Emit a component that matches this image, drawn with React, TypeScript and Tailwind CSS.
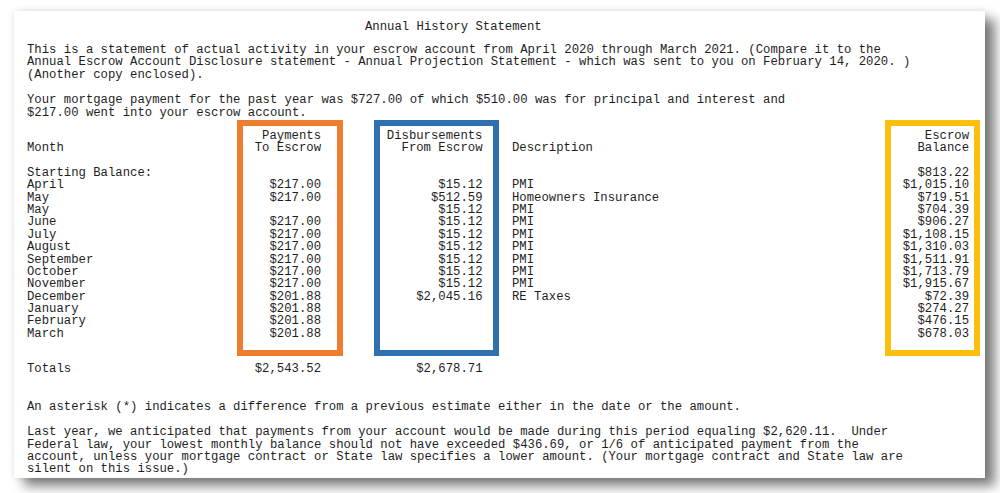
import React from 'react';

const rows = [
  { month: 'April', pay: '$217.00', dis: '$15.12', desc: 'PMI', bal: '$1,015.10' },
  { month: 'May', pay: '$217.00', dis: '$512.59', desc: 'Homeowners Insurance', bal: '$719.51' },
  { month: 'May', pay: '', dis: '$15.12', desc: 'PMI', bal: '$704.39' },
  { month: 'June', pay: '$217.00', dis: '$15.12', desc: 'PMI', bal: '$906.27' },
  { month: 'July', pay: '$217.00', dis: '$15.12', desc: 'PMI', bal: '$1,108.15' },
  { month: 'August', pay: '$217.00', dis: '$15.12', desc: 'PMI', bal: '$1,310.03' },
  { month: 'September', pay: '$217.00', dis: '$15.12', desc: 'PMI', bal: '$1,511.91' },
  { month: 'October', pay: '$217.00', dis: '$15.12', desc: 'PMI', bal: '$1,713.79' },
  { month: 'November', pay: '$217.00', dis: '$15.12', desc: 'PMI', bal: '$1,915.67' },
  { month: 'December', pay: '$201.88', dis: '$2,045.16', desc: 'RE Taxes', bal: '$72.39' },
  { month: 'January', pay: '$201.88', dis: '', desc: '', bal: '$274.27' },
  { month: 'February', pay: '$201.88', dis: '', desc: '', bal: '$476.15' },
  { month: 'March', pay: '$201.88', dis: '', desc: '', bal: '$678.03' },
];

function Line({ children }: { children?: React.ReactNode }) {
  return <div className="h-[12.35px] whitespace-pre">{children || ' '}</div>;
}

function Column({ lines, className = '' }: { lines: string[]; className?: string }) {
  return (
    <div className={`flex flex-col shrink-0 ${className}`}>
      {lines.map((l, i) => <Line key={i}>{l}</Line>)}
    </div>
  );
}

export default function App() {
  return (
    <div className="w-[1000px] h-[493px] bg-white overflow-hidden pl-[14px] pt-[11px]">
      <div
        className="w-[971px] h-[467px] bg-white pt-[10px] pl-[13px] text-[#1e1e1e] text-[12.27px] leading-[12.35px] shadow-[0_0_6px_rgba(0,0,0,0.12),10px_8px_11px_rgba(0,0,0,0.5)]"
        style={{ fontFamily: '"Liberation Mono", "Courier New", monospace' }}
      >
        <div className="ml-[338px]"><Line>Annual History Statement</Line></div>

        <div className="mt-[10.5px]">
          <Line>This is a statement of actual activity in your escrow account from April 2020 through March 2021. (Compare it to the</Line>
          <Line>Annual Escrow Account Disclosure statement - Annual Projection Statement - which was sent to you on February 14, 2020. )</Line>
          <Line>(Another copy enclosed).</Line>
        </div>

        <div className="mt-[13.5px]">
          <Line>Your mortgage payment for the past year was $727.00 of which $510.00 was for principal and interest and</Line>
          <Line>$217.00 went into your escrow account.</Line>
        </div>

        <div className="mt-[0.5px] flex items-start">
          <Column
            className="w-[210px] pt-[10.5px]"
            lines={['', 'Month', '', 'Starting Balance:', ...rows.map(r => r.month)]}
          />
          <Column
            className="w-[106px] border-[6px] border-[#ee7d2f] pt-[4.5px] pb-[10px] pr-[16px] text-right"
            lines={['Payments', 'To Escrow', '', '', ...rows.map(r => r.pay)]}
          />
          <Column
            className="ml-[31px] w-[125px] border-[6px] border-[#2e70b0] pt-[4.5px] pb-[10px] pr-[10.5px] text-right"
            lines={['Disbursements', 'From Escrow', '', '', ...rows.map(r => r.dis)]}
          />
          <Column
            className="ml-[13px] w-[373px] pt-[10.5px]"
            lines={['', 'Description', '', '', ...rows.map(r => r.desc)]}
          />
          <Column
            className="w-[95px] border-[6px] border-[#fcc00c] pt-[4.5px] pb-[10px] pr-[5px] text-right"
            lines={['Escrow', 'Balance', '', '$813.22', ...rows.map(r => r.bal)]}
          />
        </div>

        <div className="mt-[7.5px] flex">
          <div className="w-[210px] shrink-0"><Line>Totals</Line></div>
          <div className="w-[106px] shrink-0 pr-[22px] text-right"><Line>$2,543.52</Line></div>
          <div className="ml-[31px] w-[125px] shrink-0 pr-[16.5px] text-right"><Line>$2,678.71</Line></div>
        </div>

        <div className="mt-[25.5px]">
          <Line>An asterisk (*) indicates a difference from a previous estimate either in the date or the amount.</Line>
        </div>

        <div className="mt-[12.6px]">
          <Line>Last year, we anticipated that payments from your account would be made during this period equaling $2,620.11.  Under</Line>
          <Line>Federal law, your lowest monthly balance should not have exceeded $436.69, or 1/6 of anticipated payment from the</Line>
          <Line>account, unless your mortgage contract or State law specifies a lower amount. (Your mortgage contract and State law are</Line>
          <Line>silent on this issue.)</Line>
        </div>
      </div>
    </div>
  );
}
